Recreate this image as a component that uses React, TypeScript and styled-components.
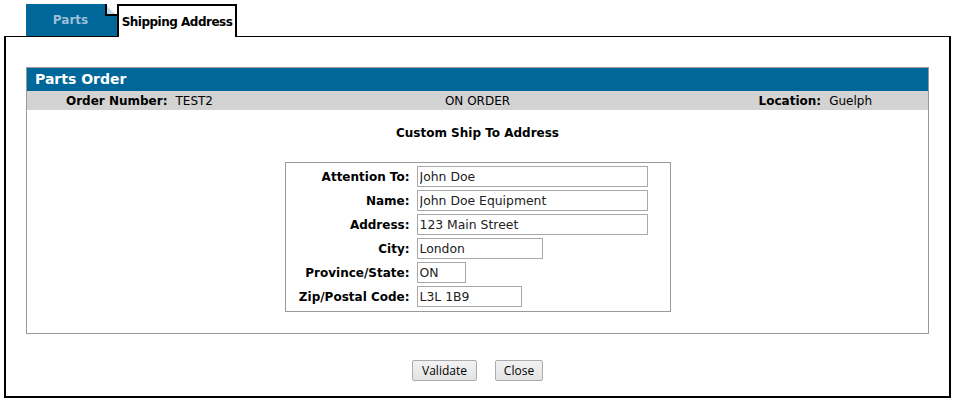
import React from "react";
import styled, { createGlobalStyle } from "styled-components";

const GlobalStyle = createGlobalStyle`
  html, body {
    margin: 0;
    padding: 0;
    background: #ffffff;
  }
  body {
    font-family: "DejaVu Sans", Verdana, sans-serif;
    font-size: 12px;
    color: #000;
  }
`;

const Page = styled.div`
  padding: 4px 0 0 4px;
  width: 947px;
`;

const TabRow = styled.div`
  display: flex;
  height: 32px;
  padding-left: 22px;
`;

const Tab = styled.div<{ $active?: boolean }>`
  position: relative;
  display: flex;
  align-items: center;
  justify-content: center;
  box-sizing: border-box;
  width: ${(p) => (p.$active ? "120px" : "91px")};
  font-weight: bold;
  font-size: 12px;
  white-space: nowrap;
  ${(p) =>
    p.$active
      ? `
    background: #fff;
    color: #000;
    border: 2px solid #000;
    border-bottom: none;
    margin-bottom: -1px;
    letter-spacing: -0.5px;
    z-index: 1;
  `
      : `
    background: #00679a;
    color: #9dbfd8;
    padding-right: 2px;
  `}
`;

const Fold = styled.svg`
  position: absolute;
  top: 0;
  right: 0;
`;

const Frame = styled.div`
  border-style: solid;
  border-color: #000;
  border-width: 1px 2px 2px 2px;
  padding: 30px 20px 15px;
`;

const Panel = styled.div`
  border: 1px solid #9a9a9a;
  padding-bottom: 21px;
`;

const PanelHeader = styled.div`
  background: #00679a;
  color: #fff;
  font-weight: bold;
  font-size: 14px;
  height: 23px;
  line-height: 23px;
  padding-left: 8px;
`;

const InfoRow = styled.div`
  display: grid;
  grid-template-columns: 1fr auto 1fr;
  align-items: center;
  background: #d3d3d3;
  height: 19px;
  font-size: 12px;
`;

const InfoCell = styled.div<{ $align: "left" | "center" | "right" }>`
  text-align: ${(p) => p.$align};
  padding-left: ${(p) => (p.$align === "left" ? "39px" : "0")};
  padding-right: ${(p) => (p.$align === "right" ? "56px" : "0")};
  white-space: nowrap;
`;

const InfoLabel = styled.span`
  font-weight: bold;
  margin-right: 8px;
`;

const Title = styled.div`
  text-align: center;
  font-weight: bold;
  font-size: 12px;
  line-height: 16px;
  padding-top: 15px;
  margin-bottom: 21px;
`;

const FormBox = styled.div`
  width: 386px;
  box-sizing: border-box;
  margin: 0 auto;
  border: 1px solid #9a9a9a;
  padding: 3px 0 4px;
  display: grid;
  grid-template-columns: 124px 1fr;
  column-gap: 7px;
  row-gap: 3px;
  align-items: center;
`;

const Label = styled.label`
  text-align: right;
  font-weight: bold;
  font-size: 12px;
  white-space: nowrap;
`;

const Input = styled.input<{ $w: number }>`
  width: ${(p) => p.$w}px;
  height: 21px;
  box-sizing: border-box;
  border: 1px solid #a9a9a9;
  padding: 0 2px;
  font-family: "DejaVu Sans", Verdana, sans-serif;
  font-size: 12.4px;
  color: #222;
  background: #fff;
  outline: none;
`;

const ButtonRow = styled.div`
  display: flex;
  justify-content: center;
  gap: 18px;
  margin-top: 26px;
`;

const Button = styled.button<{ $w: number }>`
  width: ${(p) => p.$w}px;
  height: 21px;
  box-sizing: border-box;
  padding: 0;
  font-family: "Open Sans", "Liberation Sans", sans-serif;
  font-size: 12px;
  color: #000;
  border: 1px solid #acacac;
  border-radius: 2px;
  background: linear-gradient(#f2f2f2, #e3e3e3);
`;

const fields = [
  { label: "Attention To:", value: "John Doe", w: 231 },
  { label: "Name:", value: "John Doe Equipment", w: 231 },
  { label: "Address:", value: "123 Main Street", w: 231 },
  { label: "City:", value: "London", w: 126 },
  { label: "Province/State:", value: "ON", w: 49 },
  { label: "Zip/Postal Code:", value: "L3L 1B9", w: 105 },
];

export default function App() {
  return (
    <>
      <GlobalStyle />
      <Page>
        <TabRow>
          <Tab>
            Parts
            <Fold width="12" height="12" viewBox="0 0 12 12">
              <rect x="0" y="0" width="12" height="12" fill="#fff" />
              <polygon points="1,1 11,11 1,11" fill="#c6dbeb" />
              <polyline points="1,0 1,11 12,11" fill="none" stroke="#000" strokeWidth="2" />
            </Fold>
          </Tab>
          <Tab $active>Shipping Address</Tab>
        </TabRow>
        <Frame>
          <Panel>
            <PanelHeader>Parts Order</PanelHeader>
            <InfoRow>
              <InfoCell $align="left">
                <InfoLabel>Order Number:</InfoLabel>TEST2
              </InfoCell>
              <InfoCell $align="center">ON ORDER</InfoCell>
              <InfoCell $align="right">
                <InfoLabel>Location:</InfoLabel>Guelph
              </InfoCell>
            </InfoRow>
            <Title>Custom Ship To Address</Title>
            <FormBox>
              {fields.map((f) => (
                <React.Fragment key={f.label}>
                  <Label>{f.label}</Label>
                  <Input $w={f.w} defaultValue={f.value} />
                </React.Fragment>
              ))}
            </FormBox>
          </Panel>
          <ButtonRow>
            <Button $w={65}>Validate</Button>
            <Button $w={48}>Close</Button>
          </ButtonRow>
        </Frame>
      </Page>
    </>
  );
}
